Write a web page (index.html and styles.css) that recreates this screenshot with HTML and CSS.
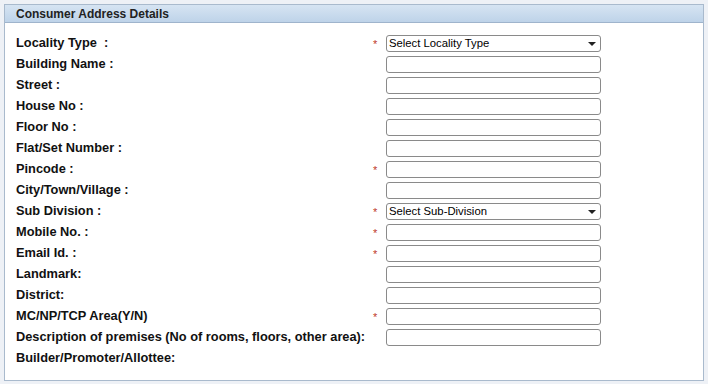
FILE: index.html
```html
<!DOCTYPE html>
<html lang="en">
<head>
    <meta charset="UTF-8">
    <title>Consumer Address Details</title>
    <link rel="stylesheet" href="styles.css">
</head>
<body>
    <div class="panel">
        <div class="panel-head">Consumer Address Details</div>
        <table class="form-table">
            <tr><td class="lbl">Locality Type&nbsp; :</td><td class="req">*</td><td><div class="select">Select Locality Type<span class="caret"></span></div></td></tr>
            <tr><td class="lbl">Building Name :</td><td class="req"></td><td><div class="input"></div></td></tr>
            <tr><td class="lbl">Street :</td><td class="req"></td><td><div class="input"></div></td></tr>
            <tr><td class="lbl">House No :</td><td class="req"></td><td><div class="input"></div></td></tr>
            <tr><td class="lbl">Floor No :</td><td class="req"></td><td><div class="input"></div></td></tr>
            <tr><td class="lbl">Flat/Set Number :</td><td class="req"></td><td><div class="input"></div></td></tr>
            <tr><td class="lbl">Pincode :</td><td class="req">*</td><td><div class="input"></div></td></tr>
            <tr><td class="lbl">City/Town/Village :</td><td class="req"></td><td><div class="input"></div></td></tr>
            <tr><td class="lbl">Sub Division :</td><td class="req">*</td><td><div class="select">Select Sub-Division<span class="caret"></span></div></td></tr>
            <tr><td class="lbl">Mobile No. :</td><td class="req">*</td><td><div class="input"></div></td></tr>
            <tr><td class="lbl">Email Id. :</td><td class="req">*</td><td><div class="input"></div></td></tr>
            <tr><td class="lbl">Landmark:</td><td class="req"></td><td><div class="input"></div></td></tr>
            <tr><td class="lbl">District:</td><td class="req"></td><td><div class="input"></div></td></tr>
            <tr><td class="lbl">MC/NP/TCP Area(Y/N)</td><td class="req">*</td><td><div class="input"></div></td></tr>
            <tr><td class="lbl">Description of premises (No of rooms, floors, other area):</td><td class="req"></td><td><div class="input"></div></td></tr>
            <tr><td class="lbl">Builder/Promoter/Allottee:</td><td class="req"></td><td></td></tr>
        </table>
    </div>
</body>
</html>
```

FILE: styles.css
```css
* {
    margin: 0;
    padding: 0;
    box-sizing: border-box;
}

body {
    font-family: "Liberation Sans", Arial, sans-serif;
    background: #eef1f6;
    padding: 4px 4px 3px 4px;
}

.panel {
    background: #fff;
    border: 1px solid #a9bacd;
    height: 377px;
}

.panel-head {
    height: 18px;
    padding: 2px 0 0 11px;
    font-size: 12px;
    font-weight: bold;
    color: #222;
    background: linear-gradient(#d6e4f2, #bed3e9);
    border-bottom: 1px solid #9fb4cc;
}

.form-table {
    border-collapse: collapse;
    margin: 10px 0 0 11px;
}

.form-table td {
    height: 21px;
    padding: 0;
    vertical-align: middle;
}

.lbl {
    width: 357px;
    padding-bottom: 2px !important;
    font-size: 12.8px;
    font-weight: bold;
    color: #111;
    white-space: nowrap;
}

.req {
    width: 13px;
    color: #c0392b;
    font-size: 11px;
}

.input,
.select {
    width: 215px;
    height: 17px;
    border: 1px solid #8a8a8a;
    border-radius: 3px;
    background: #fff;
}

.select {
    position: relative;
    font-size: 11.3px;
    line-height: 15px;
    padding-left: 2px;
    color: #000;
}

.caret {
    position: absolute;
    right: 4px;
    top: 6px;
    border-left: 4px solid transparent;
    border-right: 4px solid transparent;
    border-top: 4px solid #222;
}
```
